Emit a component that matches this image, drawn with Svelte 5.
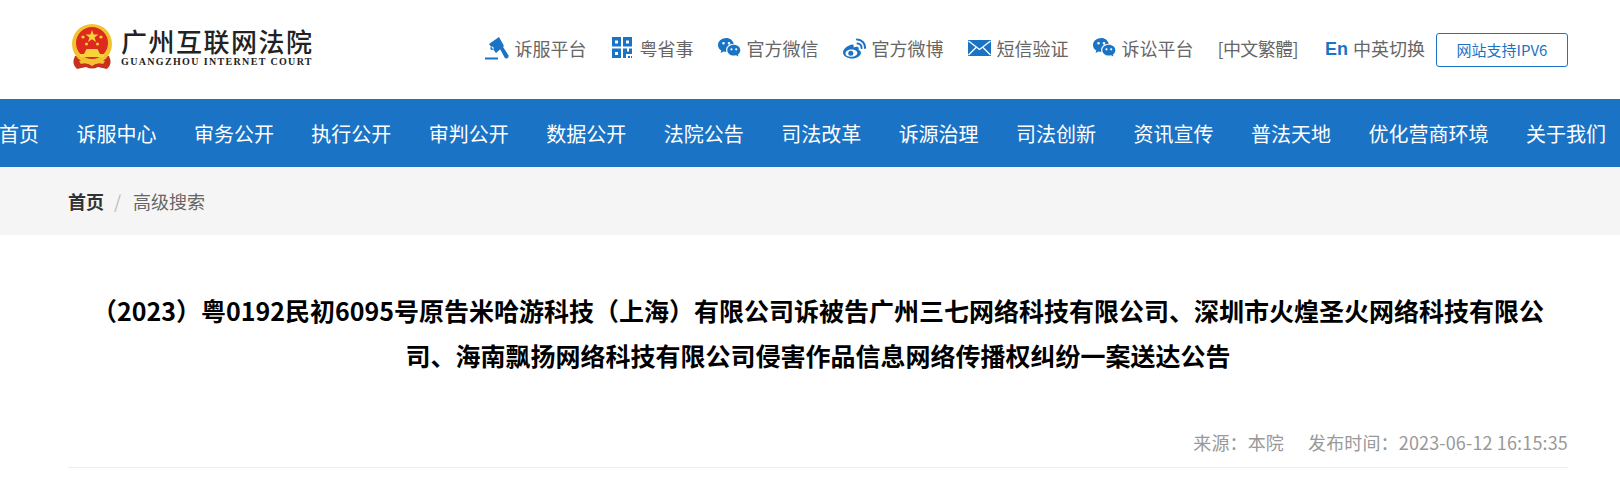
<script>
	const tools = [
		{ icon: "gavel", label: "诉服平台" },
		{ icon: "qr", label: "粤省事" },
		{ icon: "wechat", label: "官方微信" },
		{ icon: "weibo", label: "官方微博" },
		{ icon: "mail", label: "短信验证" },
		{ icon: "wechat", label: "诉讼平台" },
	];
	const navItems = [
		"首页", "诉服中心", "审务公开", "执行公开", "审判公开", "数据公开", "法院公告",
		"司法改革", "诉源治理", "司法创新", "资讯宣传", "普法天地", "优化营商环境", "关于我们",
	];
</script>

<header class="top">
	<a class="logo" href="#home">
		<svg class="emblem" viewBox="0 0 44 46" width="44" height="46">
			<path d="M5 32 Q1 40 7 45 L16 43 Q22 46 28 43 L37 45 Q43 40 39 32 Z" fill="#c8301e" />
			<circle cx="22" cy="20" r="20" fill="#f2c230" />
			<circle cx="22" cy="19" r="16" fill="#de2a1c" />
			<polygon points="22,6 23.6,10.6 28.4,10.6 24.5,13.4 26,18 22,15.2 18,18 19.5,13.4 15.6,10.6 20.4,10.6" fill="#f7d33c" />
			<circle cx="13" cy="13" r="1.6" fill="#f7d33c" />
			<circle cx="31" cy="13" r="1.6" fill="#f7d33c" />
			<circle cx="16.5" cy="20" r="1.5" fill="#f7d33c" />
			<circle cx="27.5" cy="20" r="1.5" fill="#f7d33c" />
			<path d="M14 30 L16.5 25 H27.5 L30 30 Z" fill="#f7d33c" />
			<rect x="10" y="30" width="24" height="3" fill="#f7d33c" />
			<path d="M9 37 Q15 35 22 39 Q29 35 35 37 L33 40 Q27 38 22 42 Q17 38 11 40 Z" fill="#f2c230" />
		</svg>
		<div class="logo-text">
			<div class="logo-cn">广州互联网法院</div>
			<div class="logo-en">GUANGZHOU INTERNET COURT</div>
		</div>
	</a>

	<div class="tools">
		{#each tools as tool}
			<a class="tool" href="#tool">
				<svg class="icon" viewBox="0 0 24 24" width="24" height="24">
					{#if tool.icon === "gavel"}
						<path fill-rule="evenodd" d="M4 8 L14 1 L19 10 L11 17 Z M7 10.5 A1.7 1.7 0 1 0 7 13.9 A1.7 1.7 0 1 0 7 10.5 Z" fill="#1a73c5" />
						<path d="M14.5 12 L17.5 10 L23.5 19.5 Q24 21.5 22.3 22.3 Q20.6 23 19.6 21.5 Z" fill="#1a73c5" />
						<rect x="0" y="21.5" width="13" height="2" fill="#1a73c5" />
					{:else if tool.icon === "qr"}
						<path fill-rule="evenodd" d="M2 1 H11 V10.5 H2 Z M5 4.5 V7.5 H8 V4.5 Z M13 1 H22 V10.5 H13 Z M16 4.5 V7.5 H19 V4.5 Z M2 12.5 H11 V22 H2 Z M5 16 V19 H8 V16 Z" fill="#1a73c5" />
						<path d="M13 12.5 H17 V15.5 H19 V12.5 H22 V18 H16 V22 H13 Z M18 20 H20 V22 H18 Z M21 20 H22 V22 H21 Z" fill="#1a73c5" />
					{:else if tool.icon === "wechat"}
						<path fill-rule="evenodd" d="M9.5 2 C4.8 2 1 5.1 1 9 C1 11.3 2.3 13.3 4.3 14.5 L3.6 17 L6.5 15.5 C7.4 15.8 8.4 15.9 9.4 15.9 C9.2 15.3 9.1 14.7 9.1 14 C9.1 10.4 12.5 7.6 16.8 7.7 C15.8 4.4 13 2 9.5 2 Z M6.5 6 A1.3 1.3 0 1 0 6.5 8.6 A1.3 1.3 0 1 0 6.5 6 Z M12 6 A1.3 1.3 0 1 0 12 8.6 A1.3 1.3 0 1 0 12 6 Z" fill="#1a73c5" />
						<path fill-rule="evenodd" d="M16.8 8.8 C13.2 8.8 10.3 11.2 10.3 14.2 C10.3 17.2 13.2 19.6 16.8 19.6 C17.6 19.6 18.3 19.5 19 19.3 L21.5 20.6 L20.9 18.5 C22.3 17.5 23.3 16 23.3 14.2 C23.3 11.2 20.4 8.8 16.8 8.8 Z M14.5 12.2 A1.1 1.1 0 1 0 14.5 14.4 A1.1 1.1 0 1 0 14.5 12.2 Z M19.2 12.2 A1.1 1.1 0 1 0 19.2 14.4 A1.1 1.1 0 1 0 19.2 12.2 Z" fill="#1a73c5" />
					{:else if tool.icon === "weibo"}
						<path fill-rule="evenodd" d="M10 8.5 C5.5 9.5 1 13 1 16.5 C1 20 5.3 22.5 10 22.5 C15 22.5 19 19.5 19 16.7 C19 15 17.5 14.2 16.5 13.9 C17 12.5 16.8 11.4 16 11 C15 10.4 13 11 11.5 11.6 C12 10 11.8 8.2 10 8.5 Z M9.5 13.5 C6 13.5 3.5 15.3 3.5 17.5 C3.5 19.6 6 20.8 9.2 20.8 C12.5 20.8 15.3 19.2 15.3 17 C15.3 15 12.8 13.5 9.5 13.5 Z" fill="#1a73c5" />
						<circle cx="8.8" cy="17.3" r="2.5" fill="#1a73c5" />
						<path d="M15 3.5 A8 8 0 0 1 23 12" fill="none" stroke="#1a73c5" stroke-width="2" stroke-linecap="round" />
						<path d="M15.5 7.5 A4 4 0 0 1 19.5 12" fill="none" stroke="#1a73c5" stroke-width="2" stroke-linecap="round" />
					{:else}
						<rect x="1" y="4" width="23" height="16" fill="#1a73c5" />
						<path d="M1.5 5 L12.5 13.5 L23.5 5 M1.5 19 L9 11.5 M23.5 19 L16 11.5" fill="none" stroke="#fff" stroke-width="1.3" />
					{/if}
				</svg>
				<span>{tool.label}</span>
			</a>
		{/each}
		<a class="lang" href="#tc">[中文繁體]</a>
		<a class="tool switch" href="#en"><b>En</b><span>中英切换</span></a>
		<a class="ipv6" href="#ipv6">网站支持IPV6</a>
	</div>
</header>

<nav class="nav">
	{#each navItems as item}
		<a href="#nav">{item}</a>
	{/each}
</nav>

<div class="crumb">
	<a href="#home">首页</a>
	<i>/</i>
	<span>高级搜索</span>
</div>

<main class="article">
	<h1>（2023）粤0192民初6095号原告米哈游科技（上海）有限公司诉被告广州三七网络科技有限公司、深圳市火煌圣火网络科技有限公司、海南飘扬网络科技有限公司侵害作品信息网络传播权纠纷一案送达公告</h1>
	<div class="meta">
		<span>来源：本院</span>
		<span>发布时间：2023-06-12 16:15:35</span>
	</div>
</main>

<style>
	:global(body) {
		font-family: "Liberation Sans", "Noto Sans CJK SC", sans-serif;
		background: #fff;
		overflow: hidden;
	}
	a {
		color: inherit;
		text-decoration: none;
	}
	.top {
		height: 99px;
		padding: 0 52px 0 70px;
		display: flex;
		align-items: center;
		justify-content: space-between;
	}
	.logo {
		display: flex;
		align-items: center;
		gap: 7px;
		color: #222;
		margin-bottom: 6px;
	}
	.logo-cn {
		font-family: "Noto Sans CJK SC", sans-serif;
		font-size: 26px;
		line-height: 30px;
		letter-spacing: 1.5px;
		font-weight: 500;
	}
	.logo-en {
		font-family: "Liberation Serif", serif;
		font-size: 10px;
		font-weight: 700;
		line-height: 12px;
		letter-spacing: 1.35px;
	}
	.tools {
		display: flex;
		align-items: center;
		font-family: "Noto Sans CJK SC", sans-serif;
		font-size: 18px;
		color: #666;
	}
	.tool {
		display: flex;
		align-items: center;
		gap: 5px;
		margin-right: 24px;
		margin-bottom: 4px;
	}
	.lang {
		margin-right: 27px;
		margin-bottom: 4px;
		letter-spacing: -0.6px;
	}
	.switch {
		margin-right: 11px;
		gap: 5px;
	}
	.switch b {
		color: #1a73c5;
		font-family: "Liberation Sans", sans-serif;
		font-size: 18px;
		margin-top: 4px;
	}
	.ipv6 {
		width: 132px;
		height: 34px;
		line-height: 32px;
		box-sizing: border-box;
		border: 1px solid #1a73c5;
		border-radius: 3px;
		text-align: center;
		font-size: 15px;
		color: #1a73c5;
	}
	.nav {
		height: 68px;
		margin-left: -1px;
		background: #1a73c5;
		padding-right: 14px;
		display: flex;
		justify-content: space-between;
		align-items: center;
		color: #fff;
		font-family: "Noto Sans CJK SC", sans-serif;
		font-size: 20px;
	}
	.crumb {
		height: 68px;
		background: #f5f5f5;
		padding-left: 68px;
		display: flex;
		align-items: center;
		font-family: "Noto Sans CJK SC", sans-serif;
		font-size: 18px;
		color: #666;
	}
	.crumb a {
		font-weight: 700;
		color: #333;
	}
	.crumb i {
		margin: 0 12px 0 10px;
		font-style: normal;
		color: #bbb;
	}
	.article {
		width: 1500px;
		margin-left: 68px;
		padding-top: 53px;
		border-bottom: 1px solid #eee;
	}
	h1 {
		margin: 0;
		padding: 0 18px;
		font-family: "Noto Sans CJK SC", sans-serif;
		font-size: 25px;
		font-weight: 700;
		line-height: 45px;
		text-align: center;
		color: #000;
	}
	.meta {
		margin-top: 51px;
		height: 38px;
		display: flex;
		justify-content: flex-end;
		gap: 24px;
		font-family: "Noto Sans CJK SC", sans-serif;
		font-size: 18px;
		line-height: 26px;
		letter-spacing: 0.15px;
		color: #999;
	}
</style>
